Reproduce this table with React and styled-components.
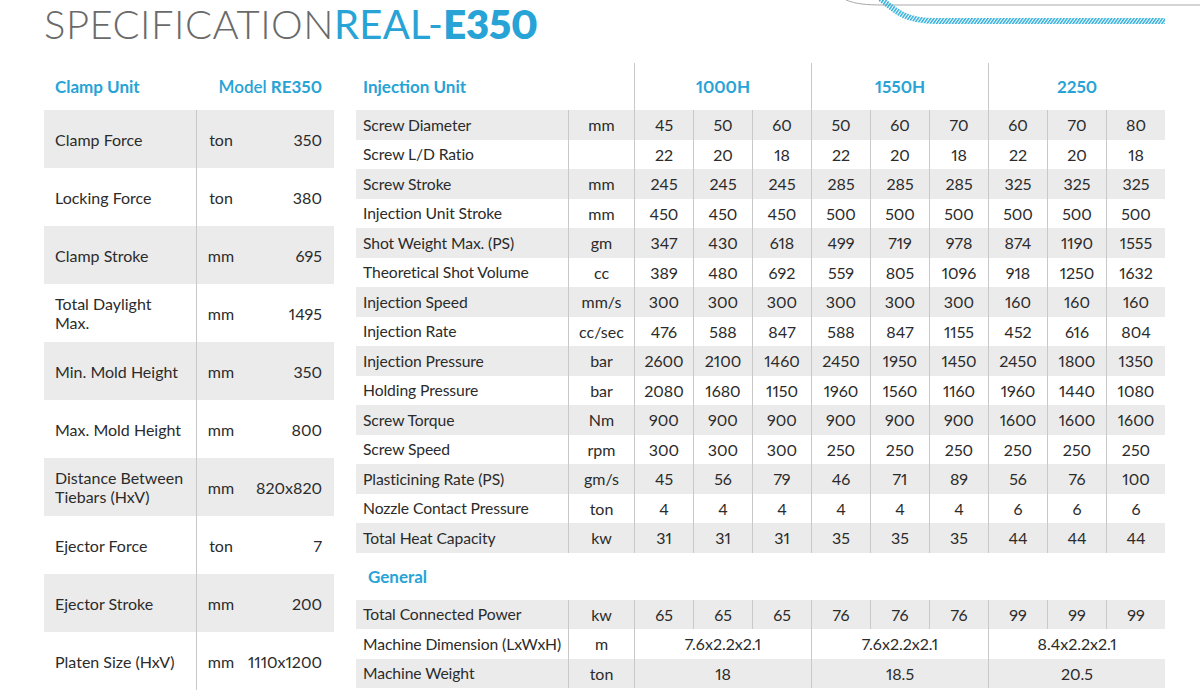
import React from 'react';
import styled, { createGlobalStyle } from 'styled-components';

const BLUE = '#27a3d6';
const LINE = '#c9c9c9';
const GRAY = '#ebebeb';

const Global = createGlobalStyle`
  html, body { margin: 0; padding: 0; background: #fff; }
  body {
    font-family: Lato, "Liberation Sans", sans-serif;
    color: #2b2b2b;
    font-feature-settings: "pnum" 1;
  }
`;

const Page = styled.div`
  position: relative;
  width: 1200px;
  height: 700px;
  overflow: hidden;
  padding-left: 44px;
  box-sizing: border-box;
  background: #fff;
`;

const Swoosh = styled.svg`
  position: absolute;
  top: 0;
  left: 0;
  pointer-events: none;
`;

const Title = styled.h1`
  margin: 0 0 15px;
  height: 48px;
  font-size: 40px;
  line-height: 48px;
  font-weight: 300;
  letter-spacing: 0.5px;
  color: #6a6a6a;
  white-space: nowrap;
`;

const TitleBlue = styled.span`
  color: ${BLUE};
  font-weight: ${(p) => (p.$bold ? 800 : 400)};
  letter-spacing: ${(p) => (p.$bold ? '-0.2px' : '0.3px')};
`;

const Content = styled.div`
  display: flex;
  gap: 22px;
  align-items: flex-start;
`;

const LeftTable = styled.div`
  width: 290px;
  display: flex;
  flex-direction: column;
`;

const LeftHeader = styled.div`
  height: 47px;
  display: flex;
  align-items: center;
  justify-content: space-between;
  padding: 0 12px 0 11px;
  color: ${BLUE};
  font-size: 17px;
  font-weight: 700;
`;

const Medium = styled.span`
  font-weight: 600;
`;

const LeftRow = styled.div`
  height: 58px;
  display: grid;
  grid-template-columns: 153px 48px 1fr;
  align-items: stretch;
  background: ${(p) => (p.$shaded ? GRAY : '#fff')};
  font-size: 16px;
`;

const LeftLabel = styled.div`
  display: flex;
  align-items: center;
  padding-left: 11px;
  border-right: 1px solid ${LINE};
  white-space: pre-line;
  line-height: 19px;
`;

const LeftUnit = styled.div`
  display: flex;
  align-items: center;
  justify-content: center;
`;

const LeftValue = styled.div`
  display: flex;
  align-items: center;
  justify-content: flex-end;
  padding-right: 12px;
`;

const RightTable = styled.div`
  width: 809px;
  display: flex;
  flex-direction: column;
`;

const COLS = '212px 66px repeat(9, 59px)';

const HeadRow = styled.div`
  height: 47px;
  display: grid;
  grid-template-columns: ${COLS};
  color: ${BLUE};
  font-size: 17px;
  font-weight: 700;
`;

const HeadTitle = styled.div`
  grid-column: span 2;
  display: flex;
  align-items: center;
  padding-left: 7px;
`;

const GroupHead = styled.div`
  grid-column: span 3;
  display: flex;
  align-items: center;
  justify-content: center;
  border-left: 1px solid ${LINE};
`;

const Row = styled.div`
  height: 29.5px;
  display: grid;
  grid-template-columns: ${COLS};
  background: ${(p) => (p.$shaded ? GRAY : '#fff')};
  font-size: 16px;
`;

const Label = styled.div`
  display: flex;
  align-items: center;
  padding-left: 7px;
  white-space: nowrap;
  font-size: 15.7px;
  letter-spacing: -0.1px;
`;

const Cell = styled.div`
  grid-column: span ${(p) => p.$span || 1};
  display: flex;
  align-items: center;
  justify-content: center;
  border-left: 1px solid ${LINE};
`;

const SectionTitle = styled.div`
  height: 47px;
  display: flex;
  align-items: center;
  padding-left: 12px;
  color: ${BLUE};
  font-size: 17px;
  font-weight: 700;
`;

const clamp = [
  ['Clamp Force', 'ton', '350'],
  ['Locking Force', 'ton', '380'],
  ['Clamp Stroke', 'mm', '695'],
  ['Total Daylight\nMax.', 'mm', '1495'],
  ['Min. Mold Height', 'mm', '350'],
  ['Max. Mold Height', 'mm', '800'],
  ['Distance Between\nTiebars (HxV)', 'mm', '820x820'],
  ['Ejector Force', 'ton', '7'],
  ['Ejector Stroke', 'mm', '200'],
  ['Platen Size (HxV)', 'mm', '1110x1200'],
];

const injection = [
  ['Screw Diameter', 'mm', [45, 50, 60, 50, 60, 70, 60, 70, 80]],
  ['Screw L/D Ratio', '', [22, 20, 18, 22, 20, 18, 22, 20, 18]],
  ['Screw Stroke', 'mm', [245, 245, 245, 285, 285, 285, 325, 325, 325]],
  ['Injection Unit Stroke', 'mm', [450, 450, 450, 500, 500, 500, 500, 500, 500]],
  ['Shot Weight Max. (PS)', 'gm', [347, 430, 618, 499, 719, 978, 874, 1190, 1555]],
  ['Theoretical Shot Volume', 'cc', [389, 480, 692, 559, 805, 1096, 918, 1250, 1632]],
  ['Injection Speed', 'mm/s', [300, 300, 300, 300, 300, 300, 160, 160, 160]],
  ['Injection Rate', 'cc/sec', [476, 588, 847, 588, 847, 1155, 452, 616, 804]],
  ['Injection Pressure', 'bar', [2600, 2100, 1460, 2450, 1950, 1450, 2450, 1800, 1350]],
  ['Holding Pressure', 'bar', [2080, 1680, 1150, 1960, 1560, 1160, 1960, 1440, 1080]],
  ['Screw Torque', 'Nm', [900, 900, 900, 900, 900, 900, 1600, 1600, 1600]],
  ['Screw Speed', 'rpm', [300, 300, 300, 250, 250, 250, 250, 250, 250]],
  ['Plasticining Rate (PS)', 'gm/s', [45, 56, 79, 46, 71, 89, 56, 76, 100]],
  ['Nozzle Contact Pressure', 'ton', [4, 4, 4, 4, 4, 4, 6, 6, 6]],
  ['Total Heat Capacity', 'kw', [31, 31, 31, 35, 35, 35, 44, 44, 44]],
];

const general = [
  ['Total Connected Power', 'kw', [65, 65, 65, 76, 76, 76, 99, 99, 99], 1],
  ['Machine Dimension (LxWxH)', 'm', ['7.6x2.2x2.1', '7.6x2.2x2.1', '8.4x2.2x2.1'], 3],
  ['Machine Weight', 'ton', ['18', '18.5', '20.5'], 3],
];

function DataRow({ label, unit, values, span = 1, shaded }) {
  return (
    <Row $shaded={shaded}>
      <Label>{label}</Label>
      <Cell>{unit}</Cell>
      {values.map((v, i) => (
        <Cell key={i} $span={span}>{v}</Cell>
      ))}
    </Row>
  );
}

export default function App() {
  return (
    <>
      <Global />
      <Page>
        <Swoosh width="1200" height="32" viewBox="0 0 1200 32">
          <defs>
            <pattern id="hatch" width="2.6" height="3" patternUnits="userSpaceOnUse" patternTransform="rotate(35)">
              <rect width="1.5" height="3" fill="#2eaed9" />
            </pattern>
          </defs>
          <path d="M846 0 C856 4 866 5 884 5 L1200 5" fill="none" stroke="#a9a9a9" strokeWidth="1" />
          <path d="M880 -2 C896 12 906 21 936 21 L1165 21" fill="none" stroke="url(#hatch)" strokeWidth="6" />
        </Swoosh>
        <Title>
          SPECIFICATION<TitleBlue>REAL-</TitleBlue><TitleBlue $bold>E350</TitleBlue>
        </Title>
        <Content>
          <LeftTable>
            <LeftHeader>
              <span>Clamp Unit</span>
              <span><Medium>Model</Medium> RE350</span>
            </LeftHeader>
            {clamp.map(([l, u, v], i) => (
              <LeftRow key={l} $shaded={i % 2 === 0}>
                <LeftLabel>{l}</LeftLabel>
                <LeftUnit>{u}</LeftUnit>
                <LeftValue>{v}</LeftValue>
              </LeftRow>
            ))}
          </LeftTable>
          <RightTable>
            <HeadRow>
              <HeadTitle>Injection Unit</HeadTitle>
              <GroupHead>1000H</GroupHead>
              <GroupHead>1550H</GroupHead>
              <GroupHead>2250</GroupHead>
            </HeadRow>
            {injection.map(([l, u, v], i) => (
              <DataRow key={l} label={l} unit={u} values={v} shaded={i % 2 === 0} />
            ))}
            <SectionTitle>General</SectionTitle>
            {general.map(([l, u, v, s], i) => (
              <DataRow key={l} label={l} unit={u} values={v} span={s} shaded={i % 2 === 0} />
            ))}
          </RightTable>
        </Content>
      </Page>
    </>
  );
}
